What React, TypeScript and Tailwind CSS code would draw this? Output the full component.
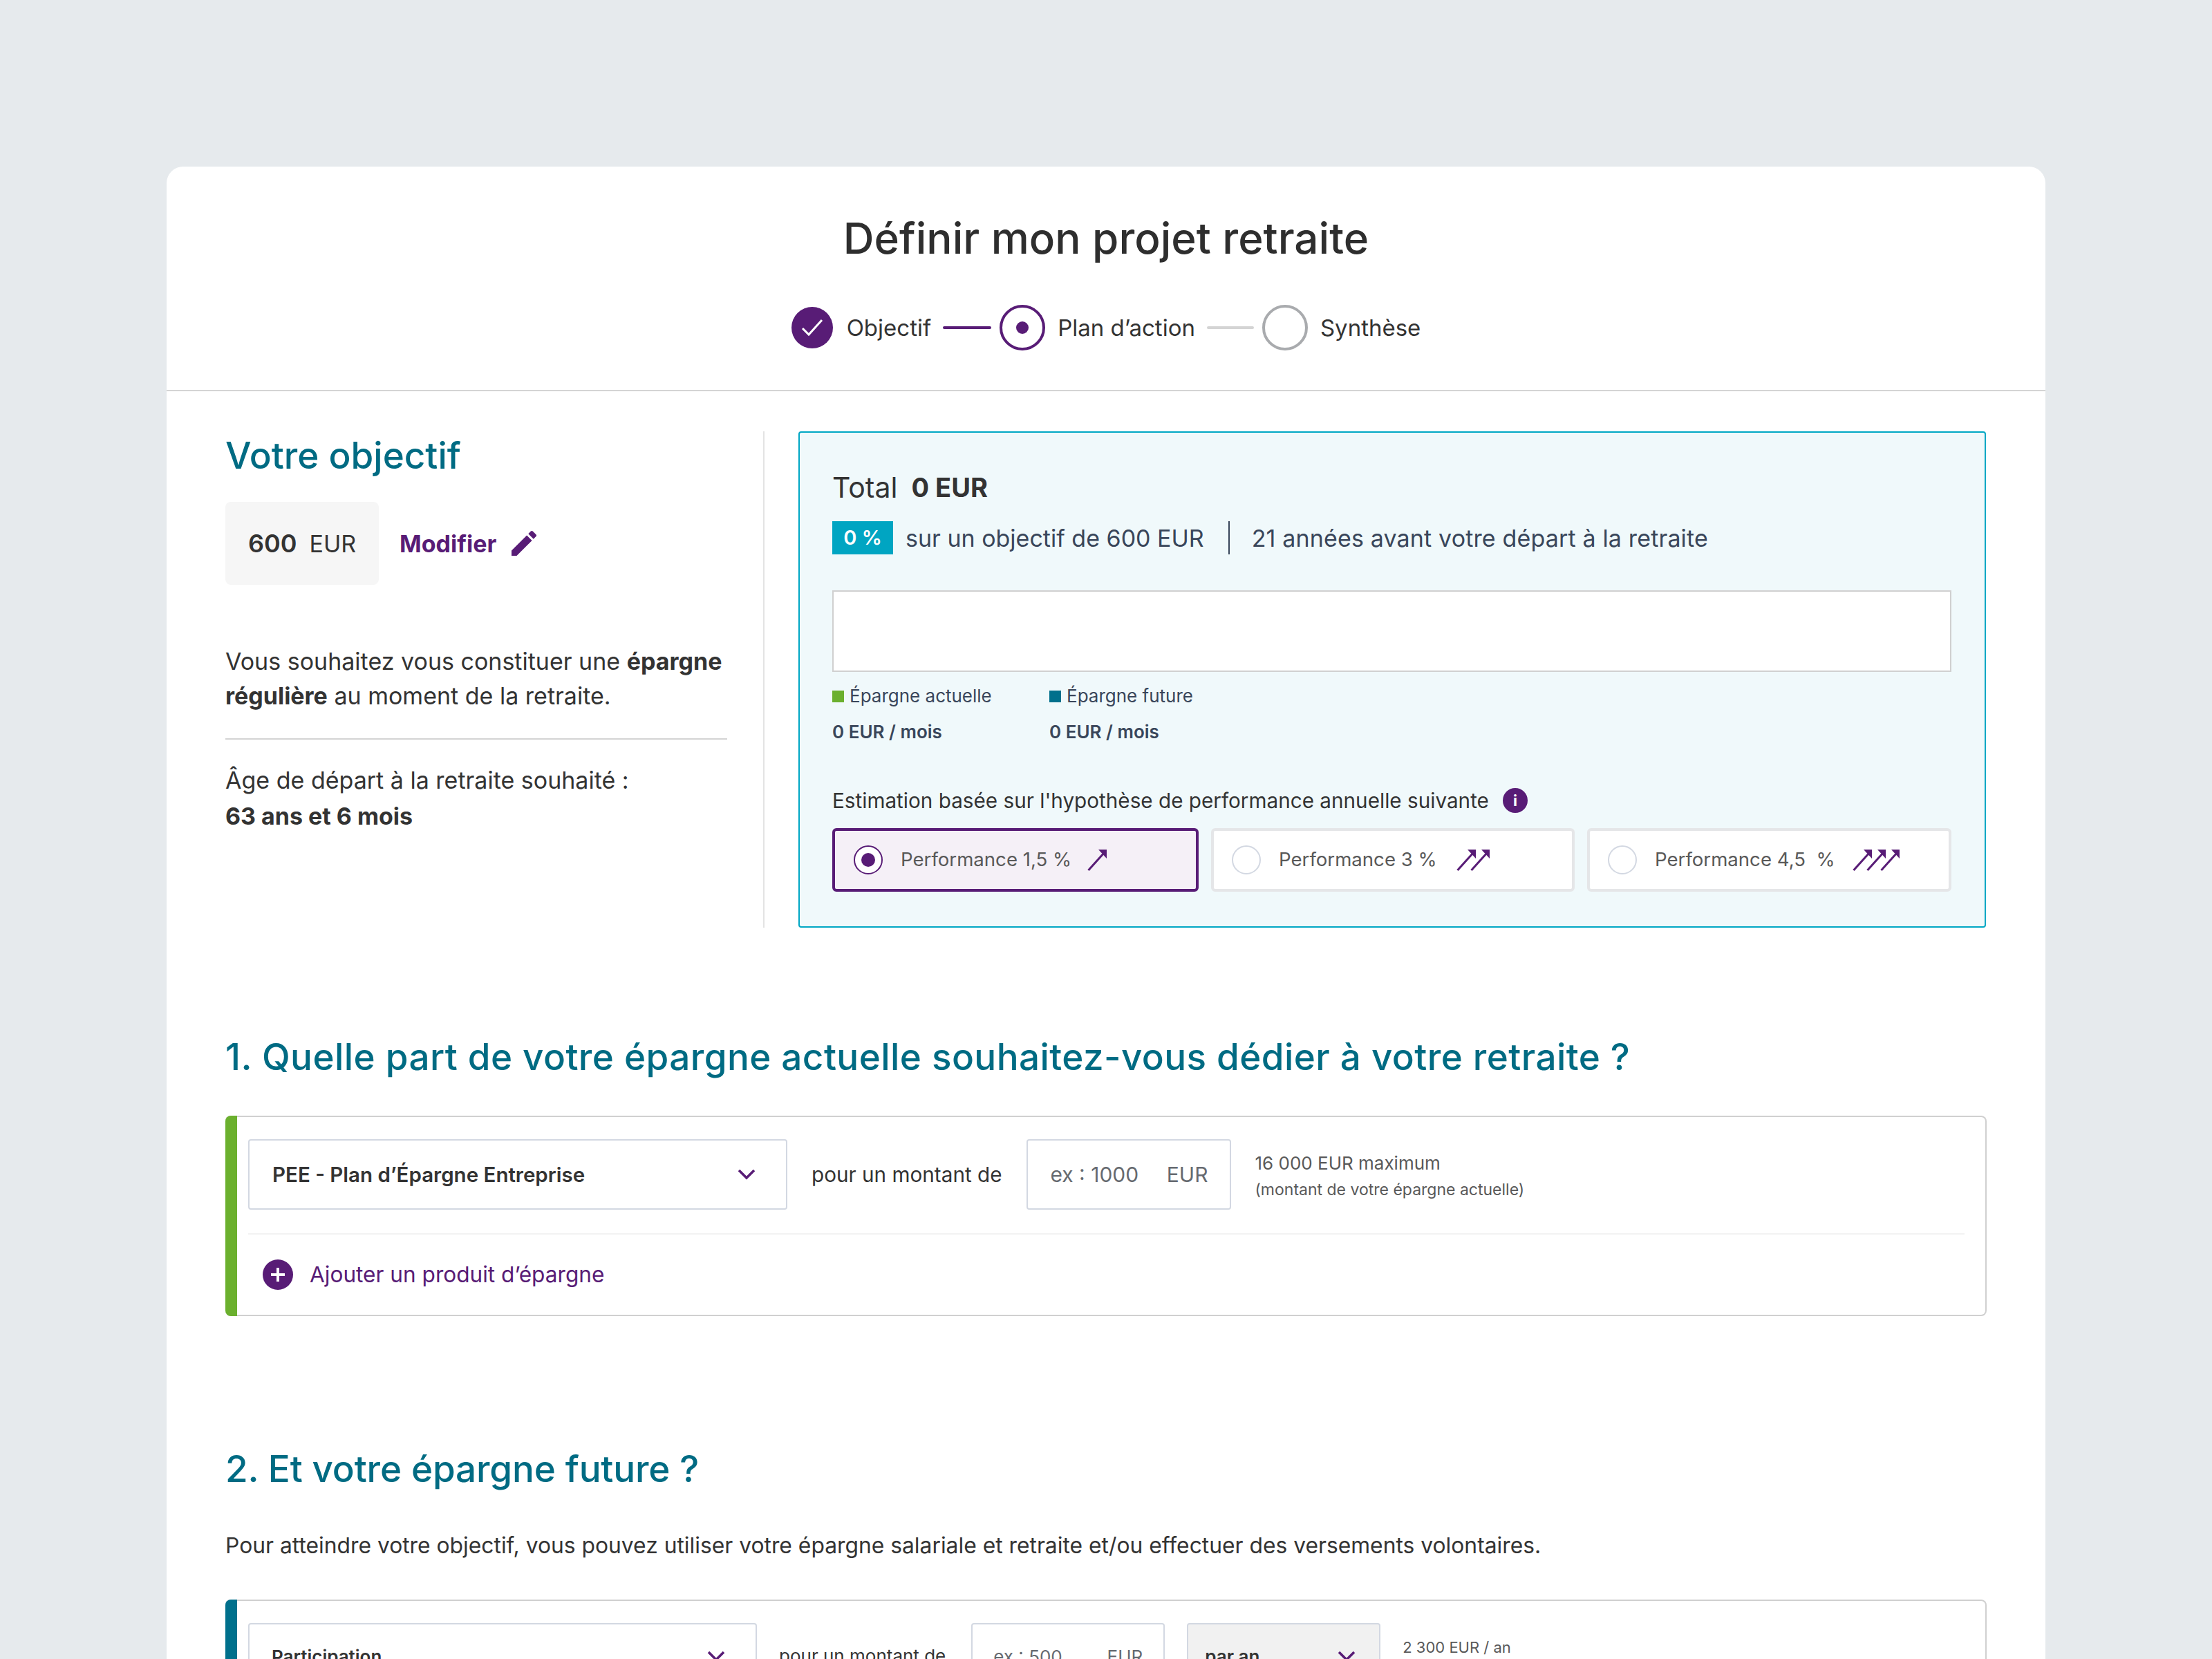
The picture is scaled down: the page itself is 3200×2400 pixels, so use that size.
import React from 'react';

const Arrow: React.FC<{ x?: number }> = ({ x = 0 }) => (
  <g transform={`translate(${x} 0)`}>
    <path d="M1.5 31 L24 6" stroke="#581c76" strokeWidth="3" fill="none" />
    <path d="M16 1 H28 V14 Z" fill="#581c76" />
  </g>
);

const Arrows: React.FC<{ count: number }> = ({ count }) => {
  const width = 30 + (count - 1) * 20;
  return (
    <svg width={width} height={32} viewBox={`0 0 ${width} 32`} className="shrink-0">
      {Array.from({ length: count }).map((_, i) => (
        <Arrow key={i} x={i * 20} />
      ))}
    </svg>
  );
};

const Chevron: React.FC = () => (
  <svg width="26" height="18" viewBox="0 0 26 18" fill="none" className="shrink-0">
    <path d="M2 3 L13 14 L24 3" stroke="#581c76" strokeWidth="3.6" />
  </svg>
);

const PerfOption: React.FC<{ label: string; arrows: number; selected?: boolean; width: string; gap: string }> = ({
  label,
  arrows,
  selected,
  width,
  gap,
}) => (
  <div
    className={`flex h-[92px] items-center rounded-[6px] border-4 ${width} ${
      selected ? 'border-[#581c76] bg-[#f5f0f7] pl-[27px]' : 'border-[#e5e6e8] bg-white pl-[26px]'
    }`}
  >
    {selected ? (
      <span className="flex h-[42px] w-[42px] shrink-0 items-center justify-center rounded-full border-2 border-[#581c76] bg-white">
        <span className="h-[20px] w-[20px] rounded-full bg-[#581c76]" />
      </span>
    ) : (
      <span className="h-[42px] w-[42px] shrink-0 rounded-full border-2 border-[#d3d8e2] bg-white" />
    )}
    <span className="ml-[26px] text-[27.6px] whitespace-pre text-[#595959]">{label}</span>
    <span className={gap}>
      <Arrows count={arrows} />
    </span>
  </div>
);

export default function App() {
  return (
    <div className="h-[2400px] w-[3200px] overflow-hidden bg-[#e6eaed] px-[241px] pt-[241px] font-[Inter,sans-serif] text-[#333333]">
      <div className="h-[2400px] rounded-t-[24px] bg-white">
        {/* En-tête */}
        <div className="flex h-[325px] flex-col items-center border-b-2 border-[#d4d4d4]">
          <h1 className="mt-[66px] text-[62px] leading-[76px] font-medium text-[#2e2e2e]">Définir mon projet retraite</h1>
          <div className="mt-[58px] flex items-center text-[33px] leading-none">
            <span className="flex h-[60px] w-[60px] items-center justify-center rounded-full bg-[#581c76]">
              <svg width="32" height="26" viewBox="0 0 32 26" fill="none">
                <path d="M2 14 L11 23 L30 2" stroke="white" strokeWidth="3" />
              </svg>
            </span>
            <span className="ml-[20px]">Objectif</span>
            <span className="ml-[17px] h-[4px] w-[70px] rounded-full bg-[#581c76]" />
            <span className="ml-[12px] flex h-[66px] w-[66px] items-center justify-center rounded-full border-4 border-[#581c76]">
              <span className="h-[18px] w-[18px] rounded-full bg-[#581c76]" />
            </span>
            <span className="ml-[18px]">Plan d’action</span>
            <span className="ml-[17px] h-[4px] w-[68px] rounded-full bg-[#d4d4d4]" />
            <span className="ml-[12px] h-[66px] w-[66px] rounded-full border-4 border-[#a9abae]" />
            <span className="ml-[18px]">Synthèse</span>
          </div>
        </div>

        <div className="px-[85px]">
          {/* Objectif + total */}
          <div className="mt-[58px] flex">
            <div className="w-[780px] border-r-2 border-[#e3e3e3]">
              <h2 className="text-[53px] leading-[70px] font-medium text-[#006b83]">Votre objectif</h2>
              <div className="mt-[32px] flex items-center">
                <div className="flex h-[120px] w-[222px] items-center justify-center rounded-[8px] bg-[#f6f6f6] text-[36px]">
                  <span className="font-semibold">600</span>
                  <span className="ml-[18px] text-[34px]">EUR</span>
                </div>
                <span className="ml-[30px] text-[34px] font-bold text-[#581c76]">Modifier</span>
                <svg width="48" height="48" viewBox="0 0 24 24" fill="#581c76" className="ml-[16px]">
                  <path d="M3 17.25V21h3.75L17.81 9.94l-3.75-3.75L3 17.25zM20.71 7.04a1 1 0 000-1.41l-2.34-2.34a1 1 0 00-1.41 0l-1.83 1.83 3.75 3.75 1.83-1.83z" />
                </svg>
              </div>
              <p className="mt-[86px] w-[726px] text-[34px] leading-[50px]">
                Vous souhaitez vous constituer une <b className="font-bold">épargne</b>
                <br />
                <b className="font-bold">régulière</b> au moment de la retraite.
              </p>
              <div className="mt-[36px] h-[2px] w-[726px] bg-[#d4d4d4]" />
              <p className="mt-[33px] text-[34px] leading-[52px]">
                Âge de départ à la retraite souhaité :<br />
                <b className="font-bold">63 ans et 6 mois</b>
              </p>
            </div>

            <div className="ml-[49px] h-[718px] w-[1718px] rounded-[4px] border-2 border-[#00a7c4] bg-[#f0f9fb] pr-[48px] pl-[47px]">
              <div className="mt-[54px] flex items-center leading-[50px]">
                <span className="text-[41px]">Total</span>
                <span className="ml-[20px] text-[38px] font-bold">0 EUR</span>
              </div>
              <div className="mt-[24px] flex h-[48px] items-center text-[34px] text-[#39465a]">
                <span className="flex h-[48px] w-[88px] items-center justify-center bg-[#00a5c2] text-[29px] font-semibold text-white">
                  0 %
                </span>
                <span className="ml-[18px]">sur un objectif de 600 EUR</span>
                <span className="ml-[35px] h-[48px] w-[2px] bg-[#39465a]" />
                <span className="ml-[32px] tracking-[0.15px]">21 années avant votre départ à la retraite</span>
              </div>
              <div className="mt-[52px] h-[118px] border-2 border-[#d0d0d0] bg-white" />
              <div className="mt-[18px] flex text-[#39465a]">
                <div className="w-[314px]">
                  <div className="flex items-center text-[26px] leading-[34px]">
                    <span className="h-[17px] w-[17px] bg-[#6bb02e]" />
                    <span className="ml-[8px]">Épargne actuelle</span>
                  </div>
                  <div className="mt-[18px] text-[26px] leading-[34px] font-semibold">0 EUR / mois</div>
                </div>
                <div>
                  <div className="flex items-center text-[26px] leading-[34px]">
                    <span className="h-[17px] w-[17px] bg-[#00708c]" />
                    <span className="ml-[8px]">Épargne future</span>
                  </div>
                  <div className="mt-[18px] text-[26px] leading-[34px] font-semibold">0 EUR / mois</div>
                </div>
              </div>
              <div className="mt-[62px] flex items-center text-[29.7px] leading-[40px]">
                <span>Estimation basée sur l'hypothèse de performance annuelle suivante</span>
                <span className="ml-[20px] flex h-[36px] w-[36px] items-center justify-center rounded-full bg-[#581c76] text-[22px] font-bold text-white">
                  i
                </span>
              </div>
              <div className="mt-[20px] flex justify-between">
                <PerfOption label="Performance 1,5 %" arrows={1} selected width="w-[530px]" gap="ml-[23px]" />
                <PerfOption label="Performance 3 %" arrows={2} width="w-[526px]" gap="ml-[28px]" />
                <PerfOption label="Performance 4,5  %" arrows={3} width="w-[527px]" gap="ml-[25px]" />
              </div>
            </div>
          </div>

          {/* Question 1 */}
          <h2 className="mt-[150px] text-[53px] leading-[74px] font-medium tracking-[0.43px] text-[#006b83]">
            1. Quelle part de votre épargne actuelle souhaitez-vous dédier à votre retraite ?
          </h2>
          <div className="mt-[48px] flex h-[290px] rounded-[8px] border-2 border-l-0 border-[#d0d0d0]">
            <div className="mt-[-2px] mb-[-2px] w-[17px] shrink-0 rounded-l-[8px] bg-[#6bb02e]" />
            <div className="flex-1 pt-[32px] pr-[30px] pl-[16px]">
              <div className="flex h-[138px] items-start border-b-2 border-[#f3f3f3]">
                <div className="flex h-[102px] w-[780px] items-center justify-between rounded-[4px] border-2 border-[#d3d8e2] pr-[44px] pl-[33px]">
                  <span className="text-[29.5px] font-semibold">PEE - Plan d’Épargne Entreprise</span>
                  <Chevron />
                </div>
                <span className="ml-[35px] pt-[32px] text-[29.7px] leading-[38px]">pour un montant de</span>
                <div className="ml-[36px] flex h-[102px] w-[296px] items-center justify-between rounded-[4px] border-2 border-[#d3d8e2] px-[32px] text-[30px] text-[#666a70]">
                  <span>ex : 1000</span>
                  <span>EUR</span>
                </div>
                <div className="ml-[34px] pt-[16px] text-[#595959]">
                  <div className="text-[26px] leading-[38px]">16 000 EUR maximum</div>
                  <div className="text-[23px] leading-[38px]">(montant de votre épargne actuelle)</div>
                </div>
              </div>
              <div className="mt-[36px] flex items-center pl-[21px]">
                <span className="flex h-[44px] w-[44px] items-center justify-center rounded-full bg-[#581c76]">
                  <svg width="24" height="24" viewBox="0 0 24 24" fill="none">
                    <path d="M12 2V22M2 12H22" stroke="white" strokeWidth="4" />
                  </svg>
                </span>
                <span className="ml-[24px] text-[31.6px] leading-[44px] text-[#581c76]">Ajouter un produit d’épargne</span>
              </div>
            </div>
          </div>

          {/* Question 2 */}
          <h2 className="mt-[184px] text-[53px] leading-[74px] font-medium tracking-[-0.15px] text-[#006b83]">2. Et votre épargne future ?</h2>
          <p className="mt-[54px] text-[31.8px] leading-[40px]">
            Pour atteindre votre objectif, vous pouvez utiliser votre épargne salariale et retraite et/ou effectuer des versements volontaires.
          </p>
          <div className="mt-[58px] flex h-[292px] rounded-[8px] border-2 border-l-0 border-[#d0d0d0]">
            <div className="mt-[-2px] mb-[-2px] w-[17px] shrink-0 rounded-l-[8px] bg-[#00708c]" />
            <div className="flex flex-1 items-start pt-[32px] pr-[16px] pl-[16px] text-[26px]">
              <div className="flex h-[96px] w-[736px] items-center justify-between rounded-[4px] border-2 border-[#d3d8e2] pr-[44px] pl-[32px]">
                <span className="font-semibold">Participation</span>
                <Chevron />
              </div>
              <span className="ml-[32px] pt-[29px] leading-[38px]">pour un montant de</span>
              <div className="ml-[37px] flex h-[96px] w-[280px] items-center justify-between rounded-[4px] border-2 border-[#d3d8e2] px-[30px] text-[#666a70]">
                <span>ex : 500</span>
                <span>EUR</span>
              </div>
              <div className="ml-[32px] flex h-[96px] w-[280px] items-center justify-between rounded-[4px] border-2 border-[#d3d8e2] bg-[#f1f1f1] pr-[34px] pl-[24px]">
                <span className="font-semibold">par an</span>
                <Chevron />
              </div>
              <div className="ml-[32px] pt-[16px] text-[22px] leading-[38px] text-[#595959]">2 300 EUR / an</div>
            </div>
          </div>
        </div>
      </div>
    </div>
  );
}
